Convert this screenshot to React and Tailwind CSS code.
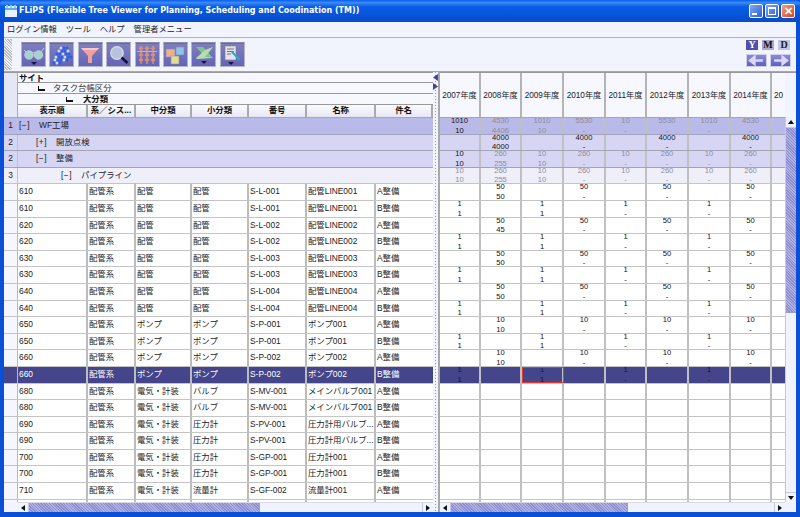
const FONT = "font-['Liberation_Sans','Noto_Sans_CJK_JP',sans-serif]";

const LEFT_COLS = ["w-[70px]", "w-[48px]", "w-[56px]", "w-[57px]", "w-[58px]", "w-[69px]", "flex-1"];
const RIGHT_COLS = ["w-[41px]", "w-[41px]", "w-[42px]", "w-[42px]", "w-[41px]", "w-[42px]", "w-[42px]", "w-[41px]", "flex-1"];
const HEAD = ["表示順", "系／シス...", "中分類", "小分類", "番号", "名称", "件名"];
const YEARS = ["2007年度", "2008年度", "2009年度", "2010年度", "2011年度", "2012年度", "2013年度", "2014年度", "20"];

const GROUPS = [
  { n: "1", pad: "pl-[1px]", mark: "[−]", label: "WF工場", bg: "bg-[#b9b9ea]" },
  { n: "2", pad: "pl-[18px]", mark: "[+]", label: "開放点検", bg: "bg-[#d6d6f4]" },
  { n: "2", pad: "pl-[18px]", mark: "[−]", label: "整備", bg: "bg-[#d6d6f4]" },
  { n: "3", pad: "pl-[43px]", mark: "[−]", label: "パイプライン", bg: "bg-[#efeffa]" },
];

const pipe = ["配管系", "配管", "配管"];
const pump = ["配管系", "ポンプ", "ポンプ"];
const elec = (a) => ["配管系", "電気・計装", a];
const ROWS = [
  ["610", ...pipe, "S-L-001", "配管LINE001", "A整備"],
  ["610", ...pipe, "S-L-001", "配管LINE001", "B整備"],
  ["620", ...pipe, "S-L-002", "配管LINE002", "A整備"],
  ["620", ...pipe, "S-L-002", "配管LINE002", "B整備"],
  ["630", ...pipe, "S-L-003", "配管LINE003", "A整備"],
  ["630", ...pipe, "S-L-003", "配管LINE003", "B整備"],
  ["640", ...pipe, "S-L-004", "配管LINE004", "A整備"],
  ["640", ...pipe, "S-L-004", "配管LINE004", "B整備"],
  ["650", ...pump, "S-P-001", "ポンプ001", "A整備"],
  ["650", ...pump, "S-P-001", "ポンプ001", "B整備"],
  ["660", ...pump, "S-P-002", "ポンプ002", "A整備"],
  ["660", ...pump, "S-P-002", "ポンプ002", "B整備"],
  ["680", ...elec("バルブ"), "S-MV-001", "メインバルブ001", "A整備"],
  ["680", ...elec("バルブ"), "S-MV-001", "メインバルブ001", "B整備"],
  ["690", ...elec("圧力計"), "S-PV-001", "圧力計用バルブ...", "A整備"],
  ["690", ...elec("圧力計"), "S-PV-001", "圧力計用バルブ...", "B整備"],
  ["700", ...elec("圧力計"), "S-GP-001", "圧力計001", "A整備"],
  ["700", ...elec("圧力計"), "S-GP-001", "圧力計001", "B整備"],
  ["710", ...elec("流量計"), "S-GF-002", "流量計001", "A整備"],
];

// right side: [top, bottom] per year column
const odd = (a, b) => [null, [a, b], null, [a, "-"], null, [a, "-"], null, [a, "-"]];
const even = [["1", "1"], null, ["1", "1"], null, ["1", "-"], null, ["1", "-"], null];
const DATA = [
  odd("50", "50"), even, odd("50", "45"), even, odd("50", "50"), even, odd("50", "50"), even,
  odd("10", "10"), even, odd("10", "10"), even,
];
const GROUP_DATA = [
  { bg: "bg-[#b9b9ea]", black: [0], cells: [["1010", "10"], ["4530", "4406"], ["1010", "10"], ["5530", "-"], ["10", "-"], ["5530", "-"], ["1010", "-"], ["4530", "-"]] },
  { bg: "bg-[#d6d6f4]", black: [1, 3, 5, 7], cells: [null, ["4000", "4000"], null, ["4000", "-"], null, ["4000", "-"], null, ["4000", "-"]] },
  { bg: "bg-[#d6d6f4]", black: [0], cells: [["10", "10"], ["260", "255"], ["10", "10"], ["260", "-"], ["10", "-"], ["260", "-"], ["10", "-"], ["260", "-"]] },
  { bg: "bg-[#efeffa]", black: [], cells: [["10", "10"], ["260", "255"], ["10", "10"], ["260", "-"], ["10", "-"], ["260", "-"], ["10", "-"], ["260", "-"]] },
];

const HATCH = "bg-[repeating-linear-gradient(45deg,#8f8fcf_0px,#8f8fcf_1px,#b0b0e0_1px,#b0b0e0_2px)]";

function Tri({ dir }) {
  const pts = { up: "1,6 4,2 7,6", down: "1,2 4,6 7,2", left: "6,1 2,4 6,7", right: "2,1 6,4 2,7" }[dir];
  return (
    <svg width="8" height="8" viewBox="0 0 8 8"><polygon points={pts} fill="#111" /></svg>
  );
}

function Glasses() {
  return (
    <svg width="22" height="20" viewBox="0 0 22 20" fill="none">
      <path d="M4 8 L1 5 M9 8 Q11 6 13 8 M18 7 L21 3" stroke="#c9cbd6" strokeWidth="1" />
      <circle cx="6" cy="10" r="4.2" fill="#9fd4d0" stroke="#c9cbd6" />
      <circle cx="15.5" cy="10" r="4.2" fill="#9fd4d0" stroke="#c9cbd6" />
      <polygon points="8,17 14,17 11,20" fill="#14143c" />
    </svg>
  );
}
function Balls() {
  const dots = [[10,3],[13,3],[16,3],[8,6],[11,6],[14,6],[17,6],[6,9],[9,9],[12,9],[15,9],[18,9],[5,12],[8,12],[11,12],[14,12],[17,12],[20,12],[4,15],[7,15],[10,15],[13,15],[16,15],[3,18],[6,18],[9,18]];
  return (
    <svg width="22" height="20" viewBox="0 0 22 20">
      {dots.map(([x, y], i) => <circle key={i} cx={x} cy={y} r="1.5" fill={i % 3 ? "#2f5fe0" : "#c4dcf8"} />)}
    </svg>
  );
}
function Funnel() {
  return (
    <svg width="22" height="20" viewBox="0 0 22 20">
      <polygon points="2,3 20,3 13,11 13,18 9,18 9,11" fill="#f0a0a0" />
      <polygon points="2,3 20,3 18,5 4,5" fill="#f7c9c9" />
    </svg>
  );
}
function Lens() {
  return (
    <svg width="22" height="20" viewBox="0 0 22 20" fill="none">
      <circle cx="9" cy="8" r="6.2" fill="#b7c2dd" stroke="#d4d7e2" strokeWidth="1.4" />
      <line x1="13.5" y1="12.5" x2="19.5" y2="18" stroke="#10102c" strokeWidth="2.4" />
    </svg>
  );
}
function Abacus() {
  const xs = [5, 11, 17];
  return (
    <svg width="22" height="20" viewBox="0 0 22 20">
      {xs.map((x) => <line key={x} x1={x} y1="1" x2={x} y2="19" stroke="#e8b080" />)}
      <line x1="1" y1="6.5" x2="21" y2="6.5" stroke="#e8b080" />
      {xs.map((x) => [3.5, 10, 15].map((y) => <ellipse key={`${x}-${y}`} cx={x} cy={y} rx="2.3" ry="1.4" fill="#ee8a60" />))}
    </svg>
  );
}
function Cubes() {
  return (
    <svg width="22" height="20" viewBox="0 0 22 20" stroke="#8a8aa8" strokeWidth="0.6">
      <rect x="12" y="2" width="8" height="8" fill="#8cc4ea" />
      <rect x="2" y="4" width="9" height="8" fill="#eeb08c" />
      <rect x="7" y="11" width="8" height="8" fill="#e2dc96" />
    </svg>
  );
}
function XlsX() {
  return (
    <svg width="22" height="20" viewBox="0 0 22 20">
      <polygon points="3,2 10,2 20,13 13,13" fill="#84c48c" />
      <polygon points="3,13 12,5 20,2 12,12 20,13 4,14" fill="#b6deb0" />
      <polygon points="8,16 14,16 11,19" fill="#14143c" />
    </svg>
  );
}
function DocPen() {
  return (
    <svg width="22" height="20" viewBox="0 0 22 20">
      <rect x="4" y="1" width="11" height="14" fill="#e4e4ea" stroke="#7a7a90" strokeWidth="0.6" />
      <path d="M6 4h7M6 6.5h7M6 9h4" stroke="#55556a" strokeWidth="0.8" />
      <line x1="11" y1="7" x2="19" y2="15" stroke="#22b0c8" strokeWidth="2.2" />
      <polygon points="7,17 13,17 10,20" fill="#14143c" />
    </svg>
  );
}

const TOOLS = [Glasses, Balls, Funnel, Lens, Abacus, Cubes, XlsX, DocPen];

function ToolButton({ Icon }) {
  return (
    <div className="w-[25px] h-[25px] flex items-center justify-center bg-[linear-gradient(#7f7fbe,#6464b8)] border border-[#b4b4c8] border-t-[#8e8ea8] shadow-[inset_0_1px_0_#6a6a9a]">
      <Icon />
    </div>
  );
}

function Scrollbar({ thumb, cls }) {
  return (
    <div className={`h-[10px] flex bg-[#f0f2fd] border-t border-[#d8d8e8] ${cls}`}>
      <div className="w-[11px] flex items-center justify-center bg-[#f0f2fd] border-r border-[#c8c8dc]"><Tri dir="left" /></div>
      <div className={`${thumb} ${HATCH} border-r border-[#9c9cc8]`} />
      <div className="flex-1" />
      <div className="w-[11px] flex items-center justify-center bg-[#f0f2fd] border-l border-[#c8c8dc]"><Tri dir="right" /></div>
    </div>
  );
}

function TreeMark() {
  return <span className="block w-[7px] h-[5px] border-l-[1.5px] border-b-2 border-[#111]" />;
}

function LeftPane() {
  return (
    <div className="w-[429px] flex flex-col shrink-0">
      <div className="flex h-[45px] shrink-0 border-t border-[#999]">
        <div className="w-[14px] bg-[#e6e7f5] border-r border-[#aaa]" />
        <div className="flex-1 flex flex-col min-w-0 text-[#111]">
          <div className="h-[10px] bg-[#f6f7ff] border-b border-[#999] pl-[1px] leading-[10px] text-[8.4px] font-bold">サイト</div>
          <div className="h-[11px] bg-[#f6f7ff] border-b border-[#999] flex items-center leading-[10px] text-[8.4px]">
            <span className="ml-[20px]"><TreeMark /></span>
            <span className="ml-[8px] text-[#333]">タスク台帳区分</span>
          </div>
          <div className="h-[11px] bg-[#f6f7ff] border-b border-[#999] flex items-center leading-[10px] text-[8.4px]">
            <span className="ml-[48px]"><TreeMark /></span>
            <span className="ml-[10px] font-bold">大分類</span>
          </div>
          <div className="flex-1 flex">
            {HEAD.map((h, i) => (
              <div key={i} className={`${LEFT_COLS[i]} border-r-2 border-[#aaa] bg-[linear-gradient(#fbfbff,#e6e7f4)] text-center leading-[11px] text-[8.4px] font-bold overflow-hidden whitespace-nowrap`}>{h}</div>
            ))}
          </div>
        </div>
      </div>

      <div className="flex-1 overflow-hidden bg-white">
        {GROUPS.map((g, i) => (
          <div key={i} className={`flex h-[16.6px] border-t border-[#a4a4b8] ${g.bg} text-[8.4px] leading-[15px] text-[#222]`}>
            <div className={`w-[14px] border-r border-[#c0c0d4] text-center ${g.bg}`}>{g.n}</div>
            <div className={`flex ${g.pad} gap-[9px]`}>
              <span className="tracking-[0.5px]">{g.mark}</span>
              <span>{g.label}</span>
            </div>
          </div>
        ))}
        {ROWS.map((r, i) => {
          const sel = i === 11;
          return (
            <div key={i} className={`flex h-[16.6px] border-t border-[#c4c4c4] text-[8.4px] leading-[15px] ${sel ? "bg-[#45458b] text-white" : "text-[#222]"}`}>
              <div className={`w-[14px] border-r border-[#b8b8c4] ${sel ? "bg-[#45458b]" : "bg-[#f6f6fd]"}`} />
              {r.map((c, j) => (
                <div key={j} className={`${LEFT_COLS[j]} ${j < 6 ? "border-r-2 border-[#bcbcbc]" : ""} pl-[1px] overflow-hidden whitespace-nowrap`}>{c}</div>
              ))}
            </div>
          );
        })}
        <div className="flex h-[3px] border-t border-[#c4c4c4]">
          <div className="w-[14px] border-r border-[#b8b8c4] bg-[#f6f6fd]" />
          {LEFT_COLS.map((w, j) => <div key={j} className={`${w} ${j < 6 ? "border-r-2 border-[#bcbcbc]" : ""}`} />)}
        </div>
      </div>

      <Scrollbar thumb="w-[231px]" cls="ml-[14px]" />
    </div>
  );
}

function Cell({ v, col, black, sel, box }) {
  const color = sel ? "text-[#11113a]" : black ? "text-[#111]" : "text-[#8c8c9a]";
  return (
    <div className={`${RIGHT_COLS[col]} ${col < 8 ? "border-r-2 border-[#c0c0c0]" : ""} ${box ? "outline outline-1 -outline-offset-1 outline-[#e03a30]" : ""} ${color} flex flex-col gap-[3.6px] text-center text-[7.6px] leading-[6px]`}>
      {v && <><div>{v[0]}</div><div>{v[1]}</div></>}
    </div>
  );
}

function RightPane() {
  const blanks = Array.from({ length: 7 });
  return (
    <div className="flex-1 min-w-0 flex flex-col">
      <div className="h-[45px] flex shrink-0 border-t border-[#999]">
        {YEARS.map((y, i) => (
          <div key={y} className={`${RIGHT_COLS[i]} ${i < 8 ? "border-r-2 border-[#b4b4b4]" : ""} bg-[#f6f7ff] flex items-center justify-center pt-[2px] text-[8.2px] text-[#222] whitespace-nowrap overflow-hidden`}>{y}</div>
        ))}
        <div className="w-[11px]" />
      </div>
      <div className="flex-1 flex min-h-0">
        <div className="flex-1 min-w-0 overflow-hidden bg-white">
          {GROUP_DATA.map((g, i) => (
            <div key={i} className={`flex h-[16.6px] border-t border-[#a4a4b8] ${g.bg}`}>
              {RIGHT_COLS.map((_, c) => <Cell key={c} col={c} v={g.cells[c]} black={g.black.includes(c)} />)}
            </div>
          ))}
          {DATA.map((row, i) => {
            const sel = i === 11;
            return (
              <div key={i} className={`flex h-[16.6px] border-t border-[#c4c4c4] ${sel ? "bg-[#45458b]" : ""}`}>
                {RIGHT_COLS.map((_, c) => <Cell key={c} col={c} v={row[c]} black sel={sel} box={sel && c === 2} />)}
              </div>
            );
          })}
          {blanks.map((_, i) => (
            <div key={i} className="flex h-[16.6px] border-t border-[#c4c4c4]">
              {RIGHT_COLS.map((_, c) => <Cell key={c} col={c} />)}
            </div>
          ))}
          <div className="flex h-[3px] border-t border-[#c4c4c4]">
            {RIGHT_COLS.map((_, c) => <Cell key={c} col={c} />)}
          </div>
        </div>
        <div className="w-[11px] flex flex-col bg-[#f0f2fd] border-l border-[#c8c8dc]">
          <div className="h-[11px] flex items-center justify-center border-b border-[#c8c8dc]"><Tri dir="up" /></div>
          <div className={`h-[185px] ${HATCH} border-b border-[#9c9cc8]`} />
          <div className="flex-1" />
          <div className="h-[10px] flex items-center justify-center border-t border-[#c8c8dc]"><Tri dir="down" /></div>
        </div>
      </div>
      <div className="flex">
        <Scrollbar thumb="w-[177px]" cls="flex-1 min-w-0" />
        <div className="w-[11px] h-[10px] bg-[#f0f2fd]" />
      </div>
    </div>
  );
}

function WinButton({ cls, children }) {
  return (
    <div className={`w-[14px] h-[14px] rounded-[2px] border border-white flex items-center justify-center ${cls}`}>{children}</div>
  );
}

export default function App() {
  return (
    <div className={`w-[800px] h-[517px] overflow-hidden flex flex-col bg-[#0a4fd8] ${FONT}`}>
      {/* title bar */}
      <div className="h-[22px] shrink-0 flex items-center pl-[5px] pr-[5px] bg-[linear-gradient(#0a5ce8_0%,#3a8cf8_12%,#0b5de6_30%,#0653d8_70%,#0a4cc8_100%)] rounded-t-[4px]">
        <svg width="12" height="12" viewBox="0 0 12 12" className="shrink-0">
          <rect x="0" y="1" width="12" height="11" fill="#e8f2ff" />
          <rect x="0" y="3" width="12" height="2" fill="#5fb0e8" />
          <rect x="1" y="0" width="2" height="3" fill="#8fd0f0" />
          <rect x="5" y="0" width="2" height="3" fill="#8fd0f0" />
          <rect x="9" y="0" width="2" height="3" fill="#8fd0f0" />
        </svg>
        <span className="ml-[2px] text-white font-bold text-[8px] whitespace-nowrap font-['DejaVu_Sans',sans-serif]">FLiPS (Flexible Tree Viewer for Planning, Scheduling and Coodination (TM))</span>
        <div className="ml-auto flex gap-[2px]">
          <WinButton cls="bg-[linear-gradient(135deg,#7fa8f0,#2f5fd8)]"><span className="block w-[5px] h-[2px] bg-white mt-[6px] mr-[3px]" /></WinButton>
          <WinButton cls="bg-[linear-gradient(135deg,#7fa8f0,#2f5fd8)]"><span className="block w-[8px] h-[8px] border border-white border-t-2" /></WinButton>
          <WinButton cls="bg-[linear-gradient(135deg,#f0a080,#d84020)] text-white text-[11px] font-bold leading-none">✕</WinButton>
        </div>
      </div>

      <div className="flex-1 min-h-0 flex flex-col mx-[4px] mb-[5px] bg-[#f1f3fd]">
        {/* menu */}
        <div className="h-[15px] shrink-0 flex items-center pl-[3px] gap-[9px] text-[8.3px] text-[#222]">
          <span>ログイン情報</span>
          <span>ツール</span>
          <span>ヘルプ</span>
          <span>管理者メニュー</span>
        </div>

        {/* toolbar */}
        <div className="h-[34px] shrink-0 flex items-center border-t border-[#b4b4b4]">
          <div className="w-[8px] h-[31px] bg-[repeating-linear-gradient(45deg,#bbb_0px,#bbb_1px,#f1f3fd_1px,#f1f3fd_2px)]" />
          <div className="flex gap-[3.4px] ml-[9px]">
            {TOOLS.map((T, i) => <ToolButton key={i} Icon={T} />)}
          </div>
          <div className="ml-auto mr-[5px] -mt-[2px] flex flex-col items-end gap-[4px]">
            <div className="flex gap-[4px] mr-[1px] font-['Liberation_Serif',serif] font-bold text-[10px] leading-[10px] text-center">
              <span className="w-[12px] h-[10px] bg-[#5050a8] text-white">Y</span>
              <span className="w-[12px] h-[10px] bg-[#a8a8d0] text-[#111]">M</span>
              <span className="w-[12px] h-[10px] bg-[#c4c4e4] text-[#222]">D</span>
            </div>
            <div className="flex gap-[3px]">
              {["M18 6.5H8M8 2.5L3 6.5L8 10.5Z", "M3 6.5H13M13 2.5L18 6.5L13 10.5Z"].map((d) => (
                <div key={d} className="w-[21px] h-[13px] bg-[linear-gradient(#8a8ad8,#6060c0)] border border-[#d0d0e4]">
                  <svg width="19" height="11" viewBox="0 0 21 13"><path d={d} stroke="#d8d8f4" strokeWidth="3" fill="#d8d8f4" /></svg>
                </div>
              ))}
            </div>
          </div>
        </div>

        {/* tables */}
        <div className="flex-1 min-h-0 flex border-t border-[#a8a8a8]">
          <LeftPane />
          <div className="w-[7px] shrink-0 flex flex-col items-center border-r-2 border-[#a8a8a8] bg-[repeating-linear-gradient(#9a9a9a_0px,#9a9a9a_1px,transparent_1px,transparent_3px)] bg-[length:1px_100%] bg-center bg-no-repeat pt-[2px]">
            <svg width="5" height="7" viewBox="0 0 5 7"><polygon points="5,0 0,3.5 5,7" fill="#44449c" /></svg>
            <svg width="5" height="7" viewBox="0 0 5 7" className="mt-[2px]"><polygon points="0,0 5,3.5 0,7" fill="#44449c" /></svg>
          </div>
          <RightPane />
        </div>
      </div>
    </div>
  );
}
